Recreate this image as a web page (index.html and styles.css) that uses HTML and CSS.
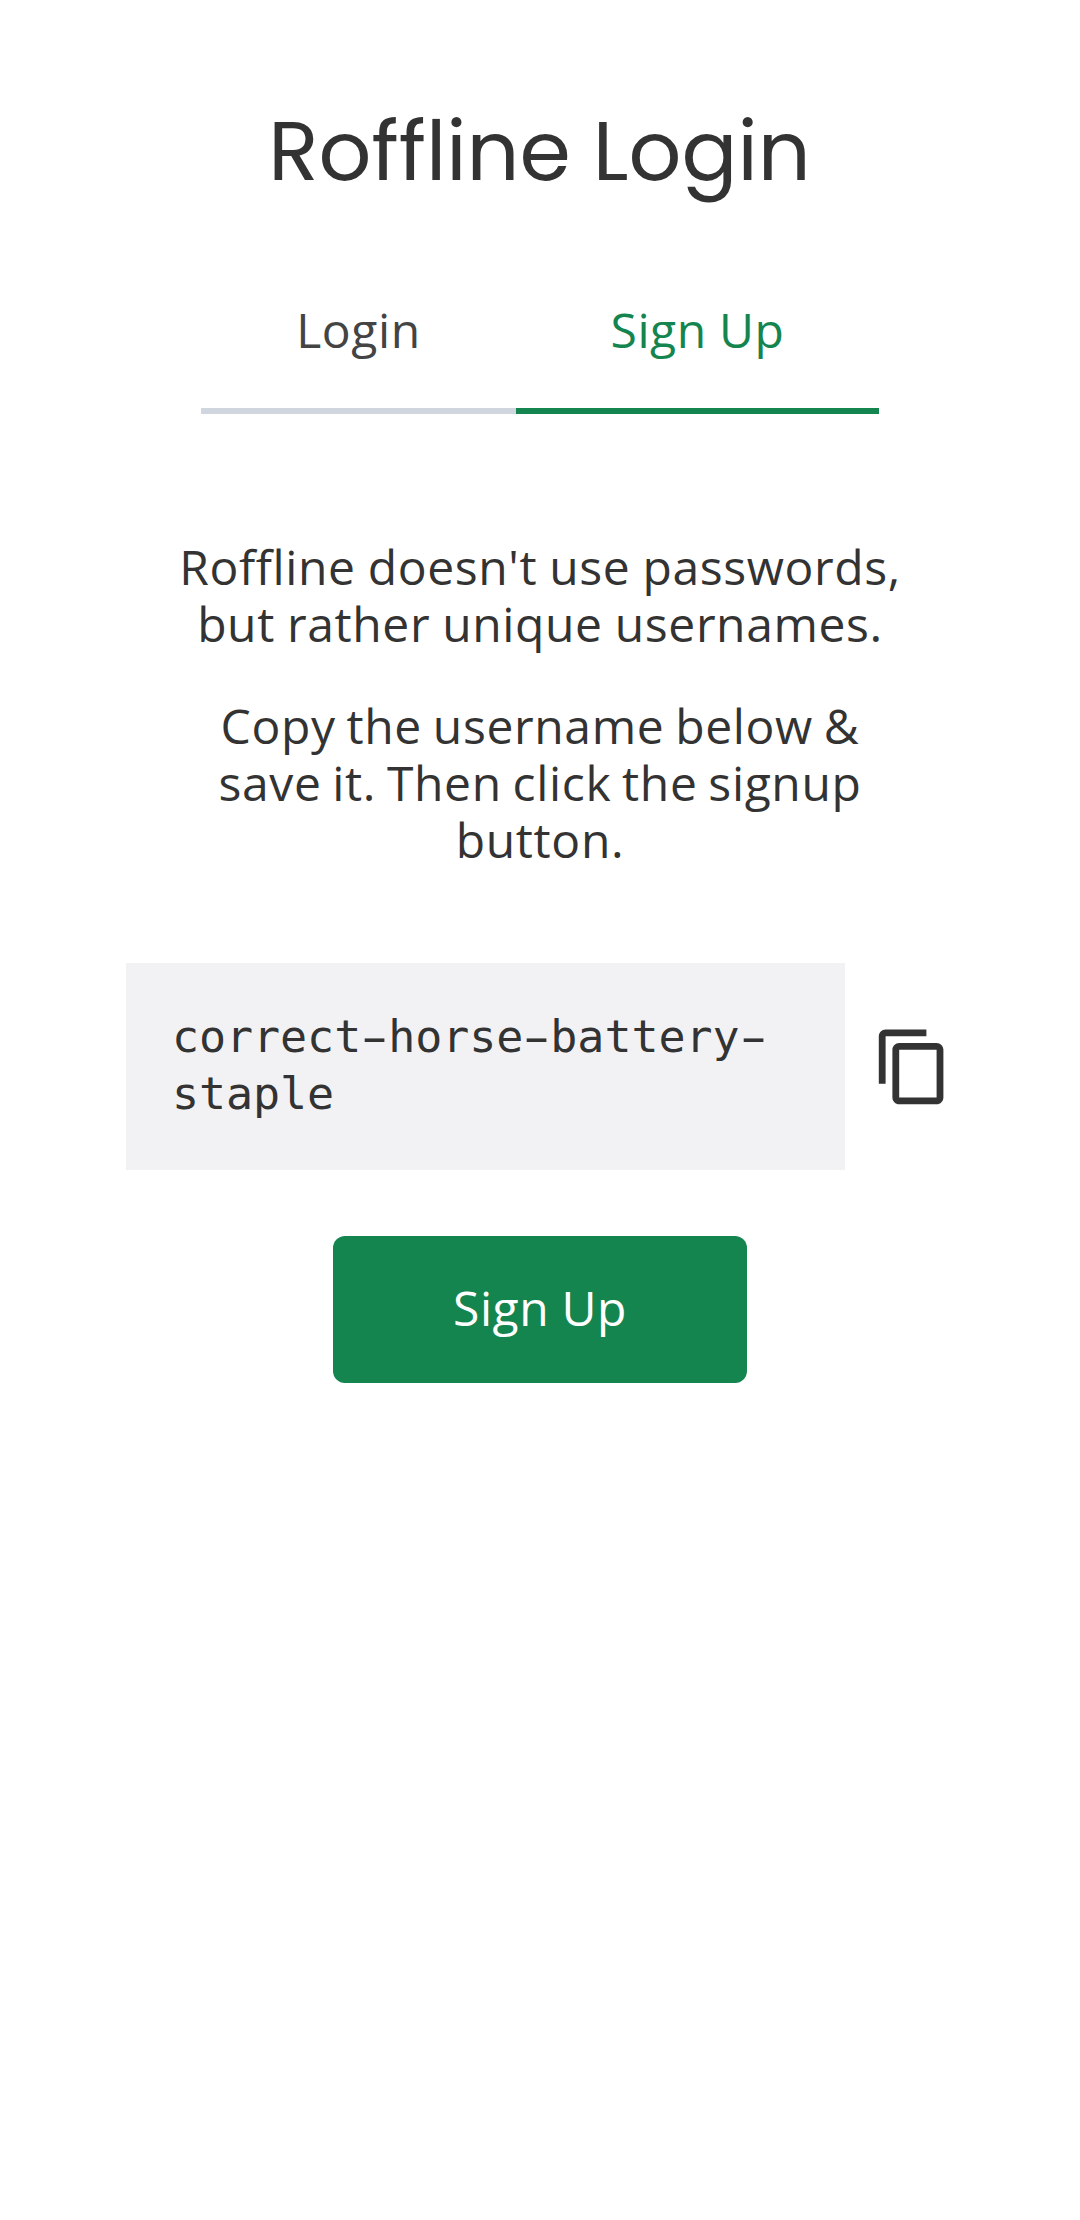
FILE: index.html
```html
<!DOCTYPE html>
<html lang="en">
<head>
<meta charset="utf-8">
<title>Roffline Login</title>
<link rel="stylesheet" href="styles.css">
</head>
<body>
<main class="page">
  <h1 class="title">Roffline Login</h1>
  <nav class="tabs">
    <a class="tab tab-login">Login</a>
    <a class="tab tab-signup">Sign Up</a>
  </nav>
  <section class="intro">
    <p>Roffline doesn't use passwords,<br>but rather unique usernames.</p>
    <p class="steps">Copy the username below &amp;<br>save it. Then click the signup<br>button.</p>
  </section>
  <div class="username-row">
    <code class="username">correct<span class="dash">-</span>horse<span class="dash">-</span>battery<span class="dash">-</span><br>staple</code>
    <svg class="copy-icon" viewBox="0 0 24 24" aria-label="Copy"><path d="M16 1H4c-1.1 0-2 .9-2 2v14h2V3h12V1zm3 4H8c-1.1 0-2 .9-2 2v14c0 1.1.9 2 2 2h11c1.1 0 2-.9 2-2V7c0-1.1-.9-2-2-2zm0 16H8V7h11v14z"/></svg>
  </div>
  <button class="signup-button">Sign Up</button>
</main>
</body>
</html>
```
FILE: styles.css
```css
* { box-sizing: border-box; }
body { margin: 0; background: #fff; }
.page {
  display: flex;
  flex-direction: column;
  align-items: center;
  min-height: 2220px;
  padding-top: 91px;
  color: #333;
  font: 48px/57px "Open Sans", sans-serif;
  letter-spacing: 0.62px;
  word-spacing: -1px;
}
.title {
  margin: 0;
  padding-right: 1px;
  font: 400 82.7px/120px Poppins, Inter, sans-serif;
  letter-spacing: 0;
  word-spacing: 0;
  white-space: nowrap;
}
.tabs { display: flex; width: 678px; margin-top: 90px; text-align: center; }
.tab { padding-bottom: 50px; border-bottom: 6px solid #d0d5de; color: #444; }
.tab-login { width: 315px; }
.tab-signup { width: 363px; border-color: #15854f; color: #15854f; }
.intro { height: 425px; padding-top: 124px; text-align: center; }
.intro p { margin: 0 0 45px; white-space: nowrap; }
.intro .steps { letter-spacing: 0.65px; word-spacing: -2.3px; }
.username-row { display: flex; align-items: center; width: 828px; margin-top: 124px; gap: 27px; }
.username {
  width: 720px;
  height: 207px;
  padding: 45px 46px;
  background: #f2f2f5;
  font: 45px/57px "DejaVu Sans Mono", monospace;
  letter-spacing: -0.07px;
  word-spacing: 0;
  white-space: nowrap;
}
.dash { display: inline-block; transform: scaleX(1.72); }
.copy-icon { flex: none; width: 81.6px; height: 81.6px; fill: #333; }
.signup-button {
  width: 414px;
  height: 147px;
  margin-top: 66px;
  padding: 43px 0 47px;
  border: 0;
  border-radius: 12px;
  background: #15854f;
  color: #fff;
  font: inherit;
  letter-spacing: inherit;
  word-spacing: inherit;
}
```
